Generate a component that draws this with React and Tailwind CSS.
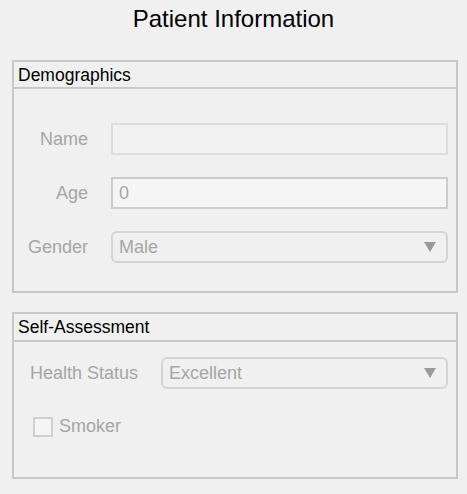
export default function App() {
  const font = { fontFamily: '"Liberation Sans", Arial, sans-serif' };
  return (
    <div className="w-[467px] h-[494px] bg-[#f0f0f0] overflow-hidden" style={font}>
      <div className="h-[60px] flex justify-center pt-[5px]">
        <div className="text-[24px] leading-[28px] text-black">Patient Information</div>
      </div>
      <div className="ml-[12px] w-[446px] h-[233px] border-2 border-[#c8c8c8] flex flex-col">
        <div className="h-[27px] border-b-2 border-[#c8c8c8] pl-[4px] text-[17.5px] leading-[26px] text-black">Demographics</div>
        <div className="flex flex-col pt-[34px] gap-[22px] pr-[8px]">
          <div className="flex items-center">
            <div className="w-[74px] text-right text-[18px] text-[#a6a6a6]">Name</div>
            <div className="ml-[23px] flex-1 h-[32px] border-2 border-[#dcdcdc] bg-[#f2f2f2]"></div>
          </div>
          <div className="flex items-center">
            <div className="w-[74px] text-right text-[18px] text-[#a6a6a6]">Age</div>
            <div className="ml-[23px] flex-1 h-[32px] border-2 border-[#cccccc] bg-[#f5f5f5] flex items-center pl-[6px] text-[18px] text-[#a6a6a6]">0</div>
          </div>
          <div className="flex items-center">
            <div className="w-[74px] text-right text-[18px] text-[#a6a6a6]">Gender</div>
            <div className="ml-[23px] flex-1 h-[32px] border-2 border-[#d4d4d4] rounded-[6px] bg-[#f0f0f0] flex items-center justify-between pl-[6px] pr-[10px] text-[18px] text-[#a6a6a6]">
              <span>Male</span>
              <svg width="12" height="10" viewBox="0 0 12 10"><path d="M0 0 L12 0 L6 10 Z" fill="#9a9a9a" /></svg>
            </div>
          </div>
        </div>
      </div>
      <div className="mt-[19px] ml-[12px] w-[446px] h-[167px] border-2 border-[#c8c8c8] flex flex-col">
        <div className="h-[28px] border-b-2 border-[#c8c8c8] pl-[4px] text-[17.5px] leading-[26px] text-black">Self-Assessment</div>
        <div className="flex flex-col pt-[15px] pr-[8px]">
          <div className="flex items-center">
            <div className="w-[124px] text-right text-[18px] text-[#a6a6a6]">Health Status</div>
            <div className="ml-[23px] flex-1 h-[32px] border-2 border-[#d4d4d4] rounded-[6px] bg-[#f0f0f0] flex items-center justify-between pl-[6px] pr-[10px] text-[18px] text-[#a6a6a6]">
              <span>Excellent</span>
              <svg width="12" height="10" viewBox="0 0 12 10"><path d="M0 0 L12 0 L6 10 Z" fill="#9a9a9a" /></svg>
            </div>
          </div>
          <div className="flex items-center mt-[24px] ml-[19px]">
            <div className="w-[20px] h-[20px] border-2 border-[#d0d0d0] bg-[#f5f5f5]"></div>
            <div className="ml-[6px] text-[18px] text-[#a6a6a6]">Smoker</div>
          </div>
        </div>
      </div>
    </div>
  );
}
